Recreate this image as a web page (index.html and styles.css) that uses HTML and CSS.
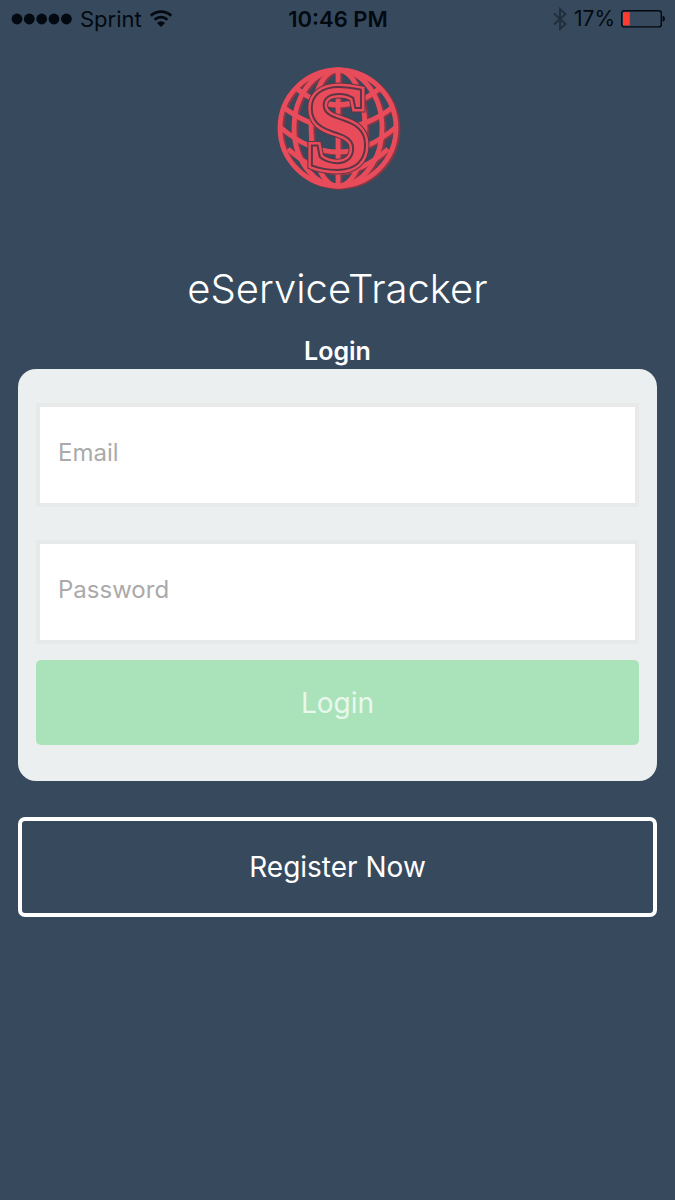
FILE: index.html
```
<!DOCTYPE html>
<html lang="en">
<head>
  <meta charset="UTF-8" />
  <meta name="viewport" content="width=device-width, initial-scale=1.0" />
  <title>eServiceTracker - Login</title>
  <link rel="stylesheet" href="styles.css">
</head>
<body>
  <div class="status-bar">
    <div class="status-left">
      <svg class="signal" width="62" height="12" viewBox="0 0 62 12" aria-hidden="true">
        <circle cx="6" cy="6" r="5.4" />
        <circle cx="18.3" cy="6" r="5.4" />
        <circle cx="30.7" cy="6" r="5.4" />
        <circle cx="43" cy="6" r="5.4" />
        <circle cx="55.4" cy="6" r="5.4" />
      </svg>
      <span>Sprint</span>
      <svg class="wifi" width="24" height="18" viewBox="0 0 24 18" aria-hidden="true">
        <path d="M1.8 5.8 A14.6 14.6 0 0 1 22.2 5.8" />
        <path d="M5.6 9.7 A9.2 9.2 0 0 1 18.4 9.7" />
        <path class="wifi-dot" d="M12 17 L8 12.9 A5.7 5.7 0 0 1 16 12.9 Z" />
      </svg>
    </div>
    <div class="status-time">10:46 PM</div>
    <div class="status-right">
      <svg class="bluetooth" width="16" height="24" viewBox="0 0 16 24" aria-hidden="true">
        <path d="M2 6.5 L13.5 17 L8 22 V2 L13.5 7 L2 17.5" />
      </svg>
      <span class="percent">17%</span>
      <svg class="battery" width="44" height="18" viewBox="0 0 44 18" aria-hidden="true">
        <rect class="battery-case" x="0.7" y="0.7" width="39.6" height="16.2" rx="2.5" />
        <rect class="battery-level" x="2" y="2.2" width="6.8" height="13.2" />
        <path d="M41.6 5.8 Q44 6.4 44 8.8 T41.6 11.8 Z" />
      </svg>
    </div>
  </div>

  <header>
    <svg class="logo" width="126" height="126" viewBox="0 0 126 126" aria-hidden="true">
      <defs>
        <g id="globe">
          <circle cx="63" cy="63" r="58" />
          <ellipse cx="63" cy="63" rx="44" ry="58" />
          <ellipse cx="63" cy="63" rx="27" ry="58" />
          <path d="M63 4 V122" />
          <path d="M22 24 Q63 56 104 24" />
          <path d="M8 42 Q63 84 118 42" />
          <path d="M5 62 Q63 112 121 62" />
          <path d="M13 84 Q63 130 113 84" />
        </g>
        <text id="monogram" x="63" y="103" text-anchor="middle">S</text>
      </defs>
      <use class="globe-shade" href="#globe" x="2" y="1" />
      <use class="globe-lines" href="#globe" />
      <use class="monogram-edge" href="#monogram" />
      <use class="monogram-rim" href="#monogram" />
      <use class="monogram-gap" href="#monogram" />
      <use class="monogram-face" href="#monogram" />
    </svg>
    <h1>eServiceTracker</h1>
    <h2>Login</h2>
  </header>

  <main>
    <form class="login-card">
      <input type="email" aria-label="Email" placeholder="Email">
      <input type="password" aria-label="Password" placeholder="Password">
      <button type="submit" class="login-btn">Login</button>
    </form>
    <button type="button" class="register-btn">Register Now</button>
  </main>
</body>
</html>
```

FILE: styles.css
```
* {
  margin: 0;
  padding: 0;
  box-sizing: border-box;
}

body {
  font-family: Inter, Roboto, 'Helvetica Neue', sans-serif;
  background: #37495d;
  color: white;
  min-height: 100vh;
}

/* Status bar */
.status-bar {
  display: grid;
  grid-template-columns: 1fr auto 1fr;
  align-items: center;
  height: 37px;
  padding: 0 10px 0 11px;
  color: #030910;
  font-size: 22px;
}

.status-left,
.status-right {
  display: flex;
  align-items: center;
}

.status-left {
  gap: 7px;
}

.status-right {
  gap: 6px;
  justify-content: flex-end;
}

.status-bar svg {
  fill: #030910;
}

.status-time {
  font-weight: 600;
}

.percent {
  font-size: 21px;
}

.status-bar .wifi {
  fill: none;
  stroke: #030910;
  stroke-width: 2.8;
}

.status-bar .wifi-dot {
  fill: #030910;
  stroke: none;
}

.status-bar .bluetooth {
  fill: none;
  stroke: #1f2d3c;
  stroke-width: 1.8;
}

.status-bar .battery-case {
  fill: none;
  stroke: #030910;
  stroke-width: 1.4;
}

.status-bar .battery-level {
  fill: #ff3b30;
}

/* Logo and titles */
header {
  display: flex;
  flex-direction: column;
  align-items: center;
  padding-top: 28px;
  text-align: center;
}

.logo {
  margin-bottom: 72px;
  fill: none;
}

.globe-shade,
.globe-lines {
  stroke: #e84c5b;
  stroke-width: 4.8;
}

.globe-shade {
  stroke: #8e3544;
}

#monogram {
  font-family: 'Liberation Serif', serif;
  font-size: 120px;
  stroke-linejoin: miter;
}

.monogram-edge {
  stroke: #5d3545;
  stroke-width: 11;
}

.monogram-rim {
  stroke: #e84c5b;
  stroke-width: 9;
}

.monogram-gap {
  stroke: #5d3545;
  stroke-width: 4;
}

.monogram-face {
  fill: #e84c5b;
}

h1 {
  font-size: 40px;
  font-weight: 300;
  line-height: 52px;
  margin-bottom: 19px;
}

h2 {
  font-size: 25px;
  font-weight: 600;
  line-height: 34px;
  padding-bottom: 1px;
}

/* Login form */
main {
  padding: 0 18px;
}

.login-card {
  display: flex;
  flex-direction: column;
  padding: 34px 18px 36px;
  margin-bottom: 36px;
  background: #ebefef;
  border-radius: 18px;
}

input {
  width: 100%;
  height: 104px;
  padding: 0 18px 6px;
  margin-bottom: 33px;
  background: white;
  border: 4px solid #e8eaea;
  border-radius: 0;
  color: #333;
  font-family: inherit;
  font-size: 24px;
}

input[type="password"] {
  margin-bottom: 16px;
}

input::placeholder {
  color: #aaa;
}

button {
  width: 100%;
  color: white;
  font-family: inherit;
  font-size: 28px;
}

.login-btn {
  height: 85px;
  background: #aae2ba;
  border: none;
  border-radius: 5px;
  color: #e9f8ed;
}

.register-btn {
  height: 100px;
  background: transparent;
  border: 4px solid white;
  border-radius: 7px;
}
```
